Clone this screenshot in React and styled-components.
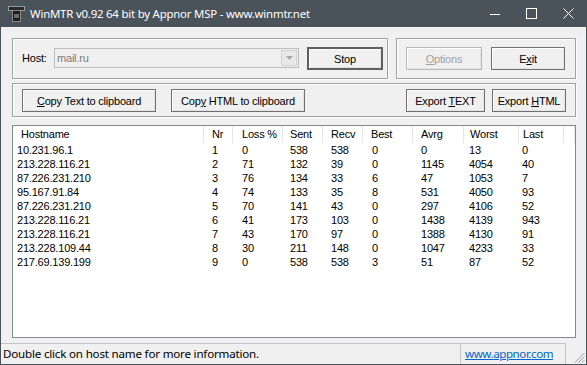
import React from "react";
import styled, { createGlobalStyle } from "styled-components";

const Global = createGlobalStyle`
  html, body { margin: 0; padding: 0; background: #4a535a; }
  * { box-sizing: border-box; }
`;

const Window = styled.div`
  width: 587px;
  height: 365px;
  display: flex;
  flex-direction: column;
  border: 1px solid #4a535a;
  border-top: 0;
  background: #f0f0f0;
  font-family: "Liberation Sans", Arial, sans-serif;
  font-size: 11px;
  letter-spacing: -0.2px;
  color: #000;
  overflow: hidden;
`;

const TitleBar = styled.div`
  height: 27px;
  flex: none;
  display: flex;
  align-items: center;
  background: #4a535a;
  margin: 0 -1px;
  padding-left: 8px;
`;

const Title = styled.div`
  margin-left: 5px;
  color: #fff;
  font-family: "Noto Sans", "Liberation Sans", sans-serif;
  font-size: 11.4px;
  letter-spacing: -0.2px;
  flex: 1;
  padding-bottom: 1px;
`;

const Controls = styled.div`
  display: flex;
  height: 100%;
`;

const Ctl = styled.div`
  width: 37px;
  height: 100%;
  display: flex;
  align-items: center;
  justify-content: center;
`;

const Client = styled.div`
  flex: 1;
  display: flex;
  flex-direction: column;
  padding: 11px 10px 5px 11px;
  min-height: 0;
`;

const TopRow = styled.div`
  display: flex;
  gap: 8px;
`;

const GroupBox = styled.div`
  border: 1px solid #a0a0a0;
  box-shadow: inset 1px 1px 0 #fff, 1px 1px 0 #fff;
  height: ${(p) => p.$h}px;
  width: ${(p) => (p.$w ? `${p.$w}px` : "auto")};
  flex: ${(p) => (p.$grow ? "1" : "none")};
  margin-top: ${(p) => p.$mt || 0}px;
  display: flex;
  align-items: flex-start;
  padding: ${(p) => p.$pt}px 0 0 9px;
`;

const HostLabel = styled.div`
  width: 32px;
  height: 23px;
  line-height: 23px;
`;

const Combo = styled.div`
  width: 245px;
  height: 20px;
  margin-top: 1px;
  border: 1px solid #bcbcbc;
  background: #f0f0f0;
  display: flex;
  align-items: center;
  padding-left: 2px;
  color: #7a7a7a;
  margin-right: 8px;
`;

const ComboText = styled.div`
  flex: 1;
`;

const ComboArrow = styled.div`
  width: 16px;
  height: 16px;
  margin-right: 1px;
  border: 1px solid #d0d0d0;
  background: #e8e8e8;
  display: flex;
  align-items: center;
  justify-content: center;
`;

const Button = styled.div`
  width: ${(p) => p.$w}px;
  height: 23px;
  flex: none;
  display: flex;
  align-items: center;
  justify-content: center;
  background: #f0f0f0;
  border: ${(p) => (p.$default ? "2px solid #5f5f5f" : p.$disabled ? "1px solid #b8b8b8" : "1px solid #707070")};
  box-shadow: inset 1px 1px 0 #fff, inset -1px -1px 0 #e3e3e3;
  color: ${(p) => (p.$disabled ? "#a0a0a0" : "#000")};
  margin-left: ${(p) => p.$ml || 0}px;
  white-space: pre;
  u { text-decoration-thickness: 1px; text-underline-offset: 1px; }
`;

const ListView = styled.div`
  margin-top: 8px;
  flex: 1;
  border: 1px solid #828790;
  background: #fff;
  display: flex;
  flex-direction: column;
`;

const COLS = "191px 29px 50px 40px 40px 50px 51px 55px 45px 1fr";

const HeaderRow = styled.div`
  display: grid;
  grid-template-columns: ${COLS};
  height: 17px;
`;

const HeaderCell = styled.div`
  border-right: 1px solid #e5e5e5;
  padding-left: ${(p) => p.$pad}px;
  line-height: 17px;
  white-space: nowrap;
  overflow: hidden;
`;

const DataRow = styled.div`
  display: grid;
  grid-template-columns: ${COLS};
  height: 14px;
  line-height: 14px;
`;

const DataCell = styled.div`
  padding-left: ${(p) => p.$pad}px;
  white-space: nowrap;
`;

const StatusBar = styled.div`
  height: 21px;
  flex: none;
  display: flex;
  font-family: "Noto Sans", "Liberation Sans", sans-serif;
  font-size: 11.6px;
  letter-spacing: -0.2px;
`;

const StatusPanel = styled.div`
  flex: ${(p) => (p.$w ? "none" : "1")};
  width: ${(p) => (p.$w ? `${p.$w}px` : "auto")};
  border-top: 1px solid #c4c4c4;
  border-right: 1px solid #c4c4c4;
  padding-left: ${(p) => p.$pad}px;
  line-height: 19px;
  white-space: nowrap;
  overflow: hidden;
`;

const Link = styled.span`
  color: #0066cc;
  text-decoration: underline;
  letter-spacing: -0.45px;
`;

const Grip = styled.div`
  width: 20px;
  display: flex;
  align-items: flex-end;
  justify-content: flex-end;
  padding: 0 1px 1px 0;
`;

const columns = [
  { name: "Hostname", hpad: 8, pad: 4 },
  { name: "Nr", hpad: 8, pad: 8 },
  { name: "Loss %", hpad: 9, pad: 9 },
  { name: "Sent", hpad: 7, pad: 7 },
  { name: "Recv", hpad: 8, pad: 8 },
  { name: "Best", hpad: 8, pad: 9 },
  { name: "Avrg", hpad: 8, pad: 8 },
  { name: "Worst", hpad: 6, pad: 5 },
  { name: "Last", hpad: 4, pad: 3 },
];

const rows = [
  ["10.231.96.1", 1, 0, 538, 538, 0, 0, 13, 0],
  ["213.228.116.21", 2, 71, 132, 39, 0, 1145, 4054, 40],
  ["87.226.231.210", 3, 76, 134, 33, 6, 47, 1053, 7],
  ["95.167.91.84", 4, 74, 133, 35, 8, 531, 4050, 93],
  ["87.226.231.210", 5, 70, 141, 43, 0, 297, 4106, 52],
  ["213.228.116.21", 6, 41, 173, 103, 0, 1438, 4139, 943],
  ["213.228.116.21", 7, 43, 170, 97, 0, 1388, 4130, 91],
  ["213.228.109.44", 8, 30, 211, 148, 0, 1047, 4233, 33],
  ["217.69.139.199", 9, 0, 538, 538, 3, 51, 87, 52],
];

function AppIcon() {
  return (
    <svg width="17" height="16" viewBox="0 0 17 16">
      <rect x="0.5" y="0.5" width="16" height="4" fill="#2a2a2a" stroke="#9a9a9a" />
      <rect x="4.5" y="4.5" width="8" height="11" fill="#1e1e1e" stroke="#8a8a8a" />
      <rect x="6" y="8" width="5" height="4" fill="#6a6a6a" />
    </svg>
  );
}

export default function App() {
  return (
    <>
      <Global />
      <Window>
        <TitleBar>
          <AppIcon />
          <Title>WinMTR v0.92 64 bit by Appnor MSP - www.winmtr.net</Title>
          <Controls>
            <Ctl>
              <svg width="10" height="10" viewBox="0 0 10 10">
                <line x1="0" y1="5.5" x2="10" y2="5.5" stroke="#fff" strokeWidth="1" />
              </svg>
            </Ctl>
            <Ctl>
              <svg width="11" height="11" viewBox="0 0 11 11">
                <rect x="0.5" y="0.5" width="10" height="10" fill="none" stroke="#fff" strokeWidth="1" />
              </svg>
            </Ctl>
            <Ctl>
              <svg width="11" height="11" viewBox="0 0 11 11">
                <path d="M0.5 0.5 L10.5 10.5 M10.5 0.5 L0.5 10.5" stroke="#fff" strokeWidth="1" />
              </svg>
            </Ctl>
          </Controls>
        </TitleBar>
        <Client>
          <TopRow>
            <GroupBox $w={376} $h={41} $pt={8}>
              <HostLabel>Host:</HostLabel>
              <Combo>
                <ComboText>mail.ru</ComboText>
                <ComboArrow>
                  <svg width="7" height="4" viewBox="0 0 7 4">
                    <path d="M0 0 L7 0 L3.5 4 Z" fill="#a8a8a8" />
                  </svg>
                </ComboArrow>
              </Combo>
              <Button $w={76} $default><span>Stop</span></Button>
            </GroupBox>
            <GroupBox $grow $h={41} $pt={8}>
              <Button $w={76} $disabled><span><u>O</u>ptions</span></Button>
              <Button $w={74} $ml={9}><span>E<u>x</u>it</span></Button>
            </GroupBox>
          </TopRow>
          <GroupBox $h={34} $pt={5} $mt={4}>
            <Button $w={134}><span><u>C</u>opy Text to clipboard</span></Button>
            <Button $w={134} $ml={15}><span>Cop<u>y</u> HTML to clipboard</span></Button>
            <Button $w={79} $ml={101}><span>Export <u>T</u>EXT</span></Button>
            <Button $w={74} $ml={7}><span>Export <u>H</u>TML</span></Button>
          </GroupBox>
          <ListView>
            <HeaderRow>
              {columns.map((c) => (
                <HeaderCell key={c.name} $pad={c.hpad}>{c.name}</HeaderCell>
              ))}
              <HeaderCell $pad={0} />
            </HeaderRow>
            {rows.map((r, i) => (
              <DataRow key={i}>
                {r.map((v, j) => (
                  <DataCell key={j} $pad={columns[j].pad}>{v}</DataCell>
                ))}
              </DataRow>
            ))}
          </ListView>
        </Client>
        <StatusBar>
          <StatusPanel $pad={2}>Double click on host name for more information.</StatusPanel>
          <StatusPanel $w={105} $pad={4}><Link>www.appnor.com</Link></StatusPanel>
          <Grip>
            <svg width="12" height="12" viewBox="0 0 12 12">
              <path d="M11.5 2 L2 11.5 M11.5 5.5 L5.5 11.5 M11.5 9 L9 11.5" stroke="#9c9c9c" strokeWidth="1" />
            </svg>
          </Grip>
        </StatusBar>
      </Window>
    </>
  );
}
